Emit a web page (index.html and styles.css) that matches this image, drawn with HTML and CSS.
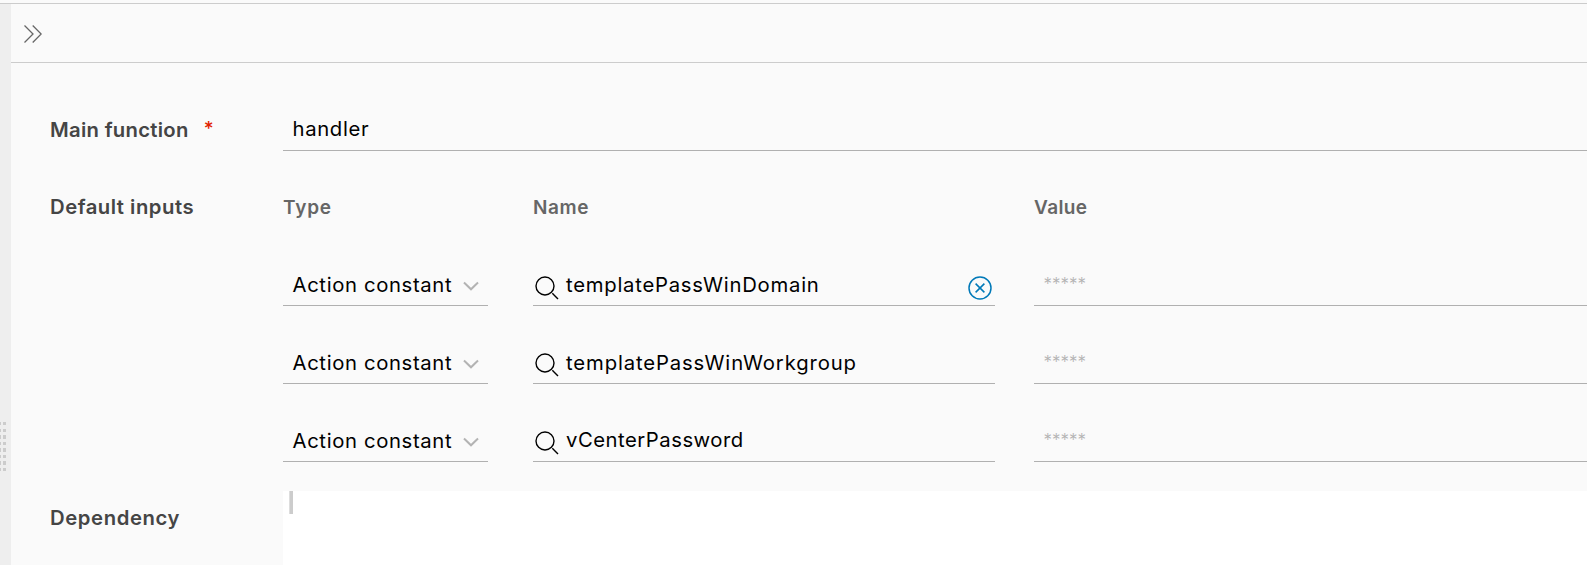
FILE: index.html
```
<!DOCTYPE html>
<html lang="en">
<head>
<meta charset="utf-8">
<title>Action settings</title>
<link rel="stylesheet" href="styles.css">
</head>
<body>
<svg class="defs" aria-hidden="true">
  <symbol id="search" viewBox="0 0 24 24"><circle cx="10" cy="10" r="9" /><path d="M17.3 17.3L23 23" /></symbol>
  <symbol id="chevron" viewBox="0 0 16 10"><path d="M1 1.5L8 8.3L15 1.5" /></symbol>
</svg>
<div class="app">
  <div class="gutter"><div class="grip"></div></div>
  <main class="panel">
    <header class="toolbar">
      <svg class="expand" viewBox="0 0 18 18"><path d="M.5 .5L9 9L.5 17.5M8.7 .5L17.2 9L8.7 17.5" /></svg>
    </header>
    <form class="form">
      <div class="row row-main">
        <label class="label main-label"><span class="t-main">Main function</span><span class="required">*</span></label>
        <div class="field field-main"><span class="t-handler">handler</span></div>
      </div>
      <div class="row row-inputs">
        <label class="label"><span class="t-default">Default inputs</span></label>
        <div class="inputs">
          <div class="head"><span class="t-type">Type</span></div>
          <div class="head"><span class="t-name">Name</span></div>
          <div class="head"><span class="t-value">Value</span></div>

          <div class="field select"><span class="t-action">Action constant</span><svg class="chevron"><use href="#chevron" /></svg></div>
          <div class="field lookup"><svg class="search"><use href="#search" /></svg><span class="t-domain">templatePassWinDomain</span>
            <svg class="clear" viewBox="0 0 24 24"><circle cx="12" cy="12" r="11" /><path d="M7.6 7.6L16.4 16.4M16.4 7.6L7.6 16.4" /></svg></div>
          <div class="field secret"><span class="t-stars">*****</span></div>

          <div class="field select"><span class="t-action">Action constant</span><svg class="chevron"><use href="#chevron" /></svg></div>
          <div class="field lookup raised"><svg class="search"><use href="#search" /></svg><span class="t-workgroup">templatePassWinWorkgroup</span></div>
          <div class="field secret"><span class="t-stars">*****</span></div>

          <div class="field select"><span class="t-action">Action constant</span><svg class="chevron"><use href="#chevron" /></svg></div>
          <div class="field lookup raised"><svg class="search"><use href="#search" /></svg><span class="t-vcenter">vCenterPassword</span></div>
          <div class="field secret"><span class="t-stars">*****</span></div>
        </div>
      </div>
      <div class="row row-dep">
        <label class="label dep-label"><span class="t-dep">Dependency</span></label>
        <div class="editor"><div class="cursor"></div></div>
      </div>
    </form>
  </main>
</div>
</body>
</html>
```
FILE: styles.css
```
* { box-sizing: border-box; }
body {
  margin: 0;
  height: 565px;
  overflow: hidden;
  padding-top: 3px;
  background: #fafafa;
  font: 400 20.3px/30px Inter, "Noto Sans", sans-serif;
  color: #000;
}
.defs { display: none; }
svg { fill: none; flex: none; }
.app { display: flex; height: 562px; border-top: 1px solid #ccc; }
.gutter { width: 11px; background: #eee; padding-top: 418px; }
.grip {
  width: 6px;
  height: 49px;
  background:
    repeating-linear-gradient(to bottom, transparent 0 3.4px, #eee 3.4px 6.57px),
    linear-gradient(to right, #ccc 0 1.3px, #eee 1.3px 2.7px, #ccc 2.7px);
}
.panel { flex: 1; min-width: 0; }
.toolbar { height: 59px; border-bottom: 1px solid #ccc; padding: 21px 0 0 12.5px; }
.expand { display: block; width: 18px; height: 18px; stroke: #666; stroke-width: 1.3; }
.form { padding: 51px 0 0 39px; }
.row { display: grid; grid-template-columns: 233px 1fr; }
.row-main { height: 77px; }
.row-inputs { height: 300px; }
.label { font-weight: 600; color: #454545; padding-top: 1px; white-space: nowrap; }
.main-label { display: flex; }
.required { color: #e12200; margin-left: 15px; font-weight: 500; font-size: 19px; line-height: 28px; }
.field { display: flex; height: 36px; border-bottom: 1px solid #b0b0b0; padding-left: 9.5px; white-space: nowrap; }
.field-main { height: 37px; }
.inputs {
  display: grid;
  grid-template-columns: 205px 462px 1fr;
  grid-template-rows: 79px 78px 78px 36px;
  column-gap: 45px;
}
.inputs > :nth-child(3n) { margin-left: -6px; }
.head { font-size: 19px; font-weight: 600; color: #666; padding-top: 2px; }
.select { justify-content: space-between; padding-right: 9.5px; }
.chevron { width: 16px; height: 10px; margin-top: 11px; stroke: #b3b3b3; stroke-width: 2; }
.lookup { padding-left: 2px; }
.search { width: 24px; height: 24px; margin: 6px 7px 0 0; stroke: #000; stroke-width: 1.4; }
.raised .search { margin-top: 5px; }
.clear { width: 24px; height: 24px; margin: 5.7px 3px 0 auto; stroke: #0079b8; stroke-width: 1.5; }
.secret { color: #b3b3b3; font-size: 17px; font-weight: 300; line-height: 28px; padding-left: 9.5px; }
.editor { background: #fff; height: 74px; padding-left: 6px; }
.row-dep { height: 74px; }
.dep-label { padding-top: 12px; }
.cursor { width: 4px; height: 23px; background: #ccc; border-left: 1px solid #ddd; }

.t-main { letter-spacing: .29px; }
.t-handler { letter-spacing: .66px; }
.t-default { letter-spacing: .5px; }
.t-type { letter-spacing: .8px; }
.t-name { letter-spacing: .6px; }
.t-value { letter-spacing: .4px; }
.t-action { letter-spacing: .64px; }
.t-domain { letter-spacing: .75px; }
.t-workgroup { letter-spacing: .87px; }
.t-vcenter { letter-spacing: .51px; line-height: 28px; }
.t-dep { letter-spacing: .6px; }
```
